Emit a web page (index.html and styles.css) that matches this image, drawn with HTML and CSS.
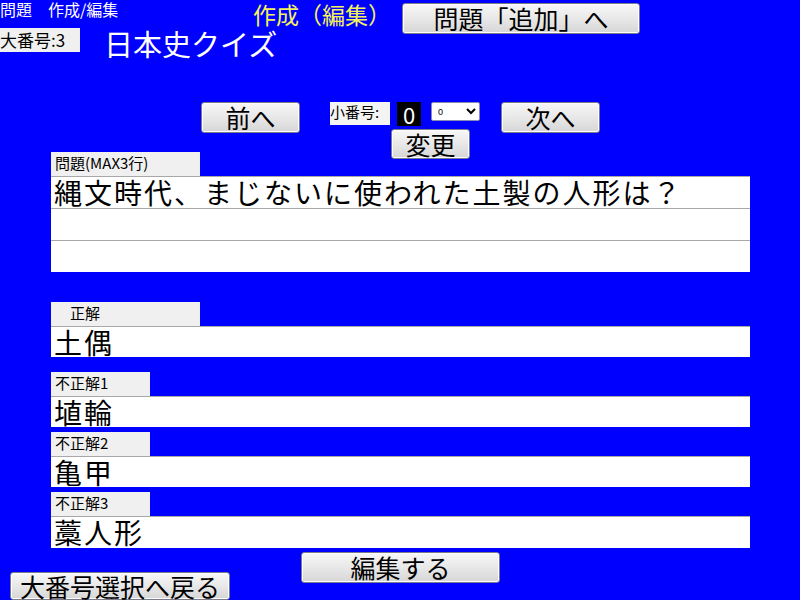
FILE: index.html
```html
<!DOCTYPE html>
<html lang="ja">
<head>
  <meta charset="UTF-8">
  <title>問題 作成/編集</title>
  <link rel="stylesheet" href="styles.css">
</head>
<body>

  <div class="top">
    <span class="app-name">問題　作成/編集</span>
    <h1 class="mode">作成（編集）</h1>
    <button class="btn btn-add">問題「追加」へ</button>
  </div>

  <div class="sub">
    <span class="big-no">大番号:3</span>
    <h2 class="quiz-title">日本史クイズ</h2>
  </div>

  <div class="nav">
    <button class="btn btn-nav">前へ</button>
    <span class="small-label">小番号:</span>
    <span class="small-no">0</span>
    <select class="small-select"><option>0</option></select>
    <button class="btn btn-nav btn-next">次へ</button>
  </div>
  <div class="change-row">
    <button class="btn btn-change">変更</button>
  </div>

  <section class="field field-question">
    <div class="field-label wide">問題(MAX3行)</div>
    <div class="box">
      <div class="line">縄文時代、まじないに使われた土製の人形は？</div>
      <div class="line"></div>
      <div class="line"></div>
    </div>
  </section>

  <section class="field field-answer">
    <div class="field-label wide">　正解</div>
    <div class="box"><div class="line">土偶</div></div>
  </section>

  <section class="field field-wrong1">
    <div class="field-label">不正解1</div>
    <div class="box"><div class="line">埴輪</div></div>
  </section>

  <section class="field field-wrong">
    <div class="field-label">不正解2</div>
    <div class="box"><div class="line">亀甲</div></div>
  </section>

  <section class="field field-wrong">
    <div class="field-label">不正解3</div>
    <div class="box"><div class="line tall">藁人形</div></div>
  </section>

  <div class="submit-row">
    <button class="btn btn-submit">編集する</button>
  </div>
  <div class="back-row">
    <button class="btn btn-back">大番号選択へ戻る</button>
  </div>

</body>
</html>
```

FILE: styles.css
```css
html, body {
  height: 100%;
}
body {
  margin: 0;
  background-color: #0000fe;
  font-family: "Noto Sans CJK JP", sans-serif;
  color: #000;
  overflow: hidden;
}
h1, h2 {
  margin: 0;
  font-weight: normal;
}

/* buttons */
.btn {
  display: flex;
  align-items: center;
  justify-content: center;
  flex-shrink: 0;
  padding: 0;
  font-family: inherit;
  font-size: 25px;
  line-height: 1;
  color: #000;
  background: linear-gradient(#f7f7f7, #e8e8e8 50%, #d6d6d6);
  border: 1px solid #7a7a8a;
  border-radius: 3px;
  box-shadow: inset 0 0 0 1px #fcfcfc;
}

/* header */
.top {
  display: flex;
  align-items: flex-start;
  height: 28px;
}
.app-name {
  width: 253px;
  color: #fff;
  font-size: 16px;
  line-height: 21px;
  margin-top: -1px;
  white-space: pre;
}
.mode {
  width: 149px;
  color: #f4f45a;
  font-size: 23px;
  line-height: 28px;
}
.btn-add {
  width: 238px;
  height: 31px;
  margin-top: 3px;
}

.sub {
  display: flex;
  align-items: flex-start;
  height: 30px;
}
.big-no {
  width: 80px;
  height: 24px;
  background: #f0f0f0;
  font-size: 17px;
  line-height: 24px;
}
.quiz-title {
  margin-left: 24px;
  color: #fff;
  font-size: 29px;
  line-height: 30px;
}

/* small number navigation */
.nav {
  display: flex;
  align-items: flex-start;
  height: 27px;
  margin-top: 44px;
  padding-left: 201px;
}
.btn-nav {
  width: 99px;
  height: 31px;
}
.small-label {
  width: 60px;
  height: 23px;
  margin-left: 30px;
  background: #f4f4f4;
  font-size: 15px;
  line-height: 20px;
}
.small-no {
  width: 24px;
  height: 24px;
  margin-left: 7px;
  background: #000;
  color: #fff;
  font-size: 22px;
  line-height: 24px;
  text-align: center;
}
.small-select {
  width: 49px;
  height: 19px;
  margin-left: 10px;
  padding: 0 0 0 2px;
  font-size: 9px;
  background: #fff;
  border: 1px solid #8a8ab0;
  border-radius: 2px;
}
.btn-next {
  margin-left: 21px;
}
.change-row {
  height: 23px;
  padding-left: 391px;
}
.btn-change {
  width: 79px;
  height: 30px;
}

/* input fields */
.field {
  margin-left: 51px;
  width: 699px;
}
.field-label {
  width: 99px;
  height: 24px;
  padding-left: 4px;
  box-sizing: border-box;
  background: #f0f0f0;
  font-size: 15px;
  line-height: 22px;
  white-space: pre;
}
.field-label.wide {
  width: 149px;
}
.box {
  background: #fff;
}
.line {
  height: 30px;
  padding-left: 3px;
  border-top: 1px solid #a8a8a8;
  font-size: 28px;
  letter-spacing: 2px;
  line-height: 31px;
  white-space: nowrap;
}
.field-question .line {
  height: 31px;
}
.line.tall {
  height: 31px;
}
.field-answer {
  margin-top: 30px;
}
.field-wrong1 {
  margin-top: 15px;
}
.field-wrong {
  margin-top: 5px;
}

/* footer buttons */
.submit-row {
  height: 20px;
  margin-top: 4px;
  padding-left: 301px;
}
.btn-submit {
  width: 199px;
  height: 31px;
}
.back-row {
  padding-left: 10px;
}
.btn-back {
  width: 220px;
  height: 28px;
  font-size: 25px;
}
```
